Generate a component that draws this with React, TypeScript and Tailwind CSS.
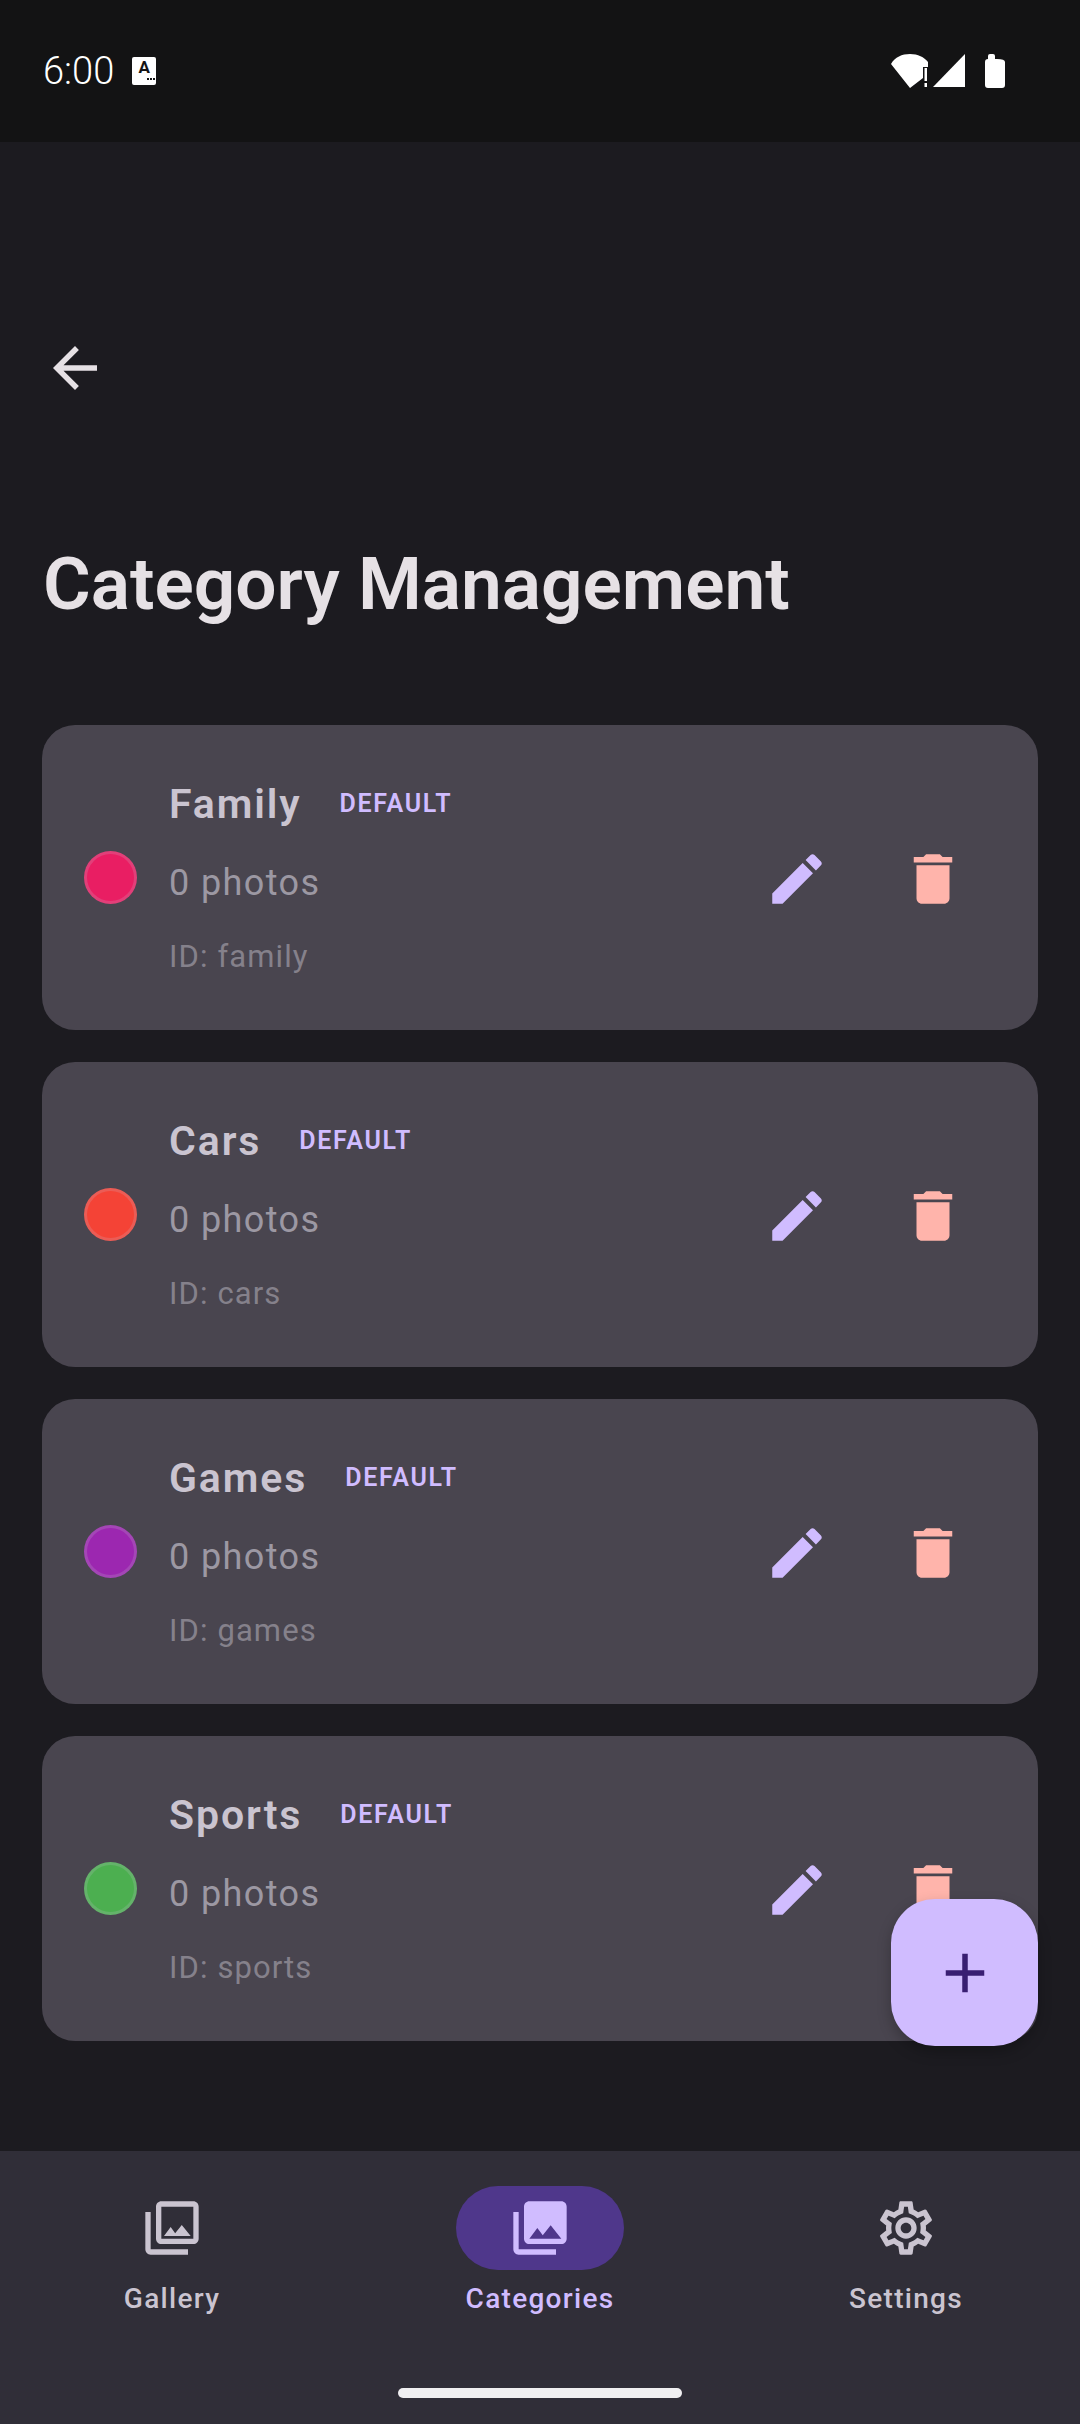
const Ic = ({ d, size = 66, className = "" }: { d: string; size?: number; className?: string }) => (
  <svg width={size} height={size} viewBox="0 0 24 24" className={className} fill="currentColor"><path d={d} /></svg>
);

const BACK = "M20 11H7.83l5.59-5.59L12 4l-8 8 8 8 1.41-1.41L7.83 13H20v-2z";
const EDIT = "M3 17.25V21h3.75L17.81 9.94l-3.75-3.75L3 17.25zM20.71 7.04c.39-.39.39-1.02 0-1.41l-2.34-2.34c-.39-.39-1.02-.39-1.41 0l-1.83 1.83 3.75 3.75 1.83-1.83z";
const DEL = "M6 19c0 1.1.9 2 2 2h8c1.1 0 2-.9 2-2V7H6v12zM19 4h-3.5l-1-1h-5l-1 1H5v2h14V4z";
const ADD = "M19 13h-6v6h-2v-6H5v-2h6V5h2v6h6v2z";
const LIB = "M22 16V4c0-1.1-.9-2-2-2H8c-1.1 0-2 .9-2 2v12c0 1.1.9 2 2 2h12c1.1 0 2-.9 2-2zm-11-4l2.03 2.71L16 11l4 5H8l3-4zM2 6v14c0 1.1.9 2 2 2h14v-2H4V6H2z";
const LIB_O = "M20 4v12H8V4h12m0-2H8c-1.1 0-2 .9-2 2v12c0 1.1.9 2 2 2h12c1.1 0 2-.9 2-2V4c0-1.1-.9-2-2-2zm-8.5 9.67l1.69 2.26 2.48-3.1L19 15H9zM2 6v14c0 1.1.9 2 2 2h14v-2H4V6H2z";
const GEAR = "M19.43 12.98c.04-.32.07-.64.07-.98 0-.34-.03-.66-.07-.98l2.11-1.65c.19-.15.24-.42.12-.64l-2-3.46c-.09-.16-.26-.25-.44-.25-.06 0-.12.01-.17.03l-2.49 1c-.52-.4-1.08-.73-1.69-.98l-.38-2.65C14.46 2.18 14.25 2 14 2h-4c-.25 0-.46.18-.49.42l-.38 2.65c-.61.25-1.17.59-1.69.98l-2.49-1c-.06-.02-.12-.03-.18-.03-.17 0-.34.09-.43.25l-2 3.46c-.13.22-.07.49.12.64l2.11 1.65c-.04.32-.07.65-.07.98 0 .33.03.66.07.98l-2.11 1.65c-.19.15-.24.42-.12.64l2 3.46c.09.16.26.25.44.25.06 0 .12-.01.17-.03l2.49-1c.52.4 1.08.73 1.69.98l.38 2.65c.03.24.24.42.49.42h4c.25 0 .46-.18.49-.42l.38-2.65c.61-.25 1.17-.59 1.69-.98l2.49 1c.06.02.12.03.18.03.17 0 .34-.09.43-.25l2-3.46c.12-.22.07-.49-.12-.64l-2.11-1.65zm-1.98-1.71c.04.31.05.52.05.73 0 .21-.02.43-.05.73l-.14 1.13.89.7 1.08.84-.7 1.21-1.27-.51-1.04-.42-.9.68c-.43.32-.84.56-1.25.73l-1.06.43-.16 1.13-.2 1.35h-1.4l-.19-1.35-.16-1.13-1.06-.43c-.43-.18-.83-.41-1.23-.71l-.91-.7-1.06.43-1.27.51-.7-1.21 1.08-.84.89-.7-.14-1.13c-.03-.31-.05-.54-.05-.74s.02-.43.05-.73l.14-1.13-.89-.7-1.08-.84.7-1.21 1.27.51 1.04.42.9-.68c.43-.32.84-.56 1.25-.73l1.06-.43.16-1.13.2-1.35h1.39l.19 1.35.16 1.13 1.06.43c.43.18.83.41 1.23.71l.91.7 1.06-.43 1.27-.51.7 1.21-1.07.85-.89.7.14 1.13zM12 8c-2.21 0-4 1.79-4 4s1.79 4 4 4 4-1.79 4-4-1.79-4-4-4zm0 6c-1.1 0-2-.9-2-2s.9-2 2-2 2 .9 2 2-.9 2-2 2z";

const cats = [
  { name: "Family", id: "family", dot: "bg-[#e91e63]" },
  { name: "Cars", id: "cars", dot: "bg-[#f44336]" },
  { name: "Games", id: "games", dot: "bg-[#9c27b0]" },
  { name: "Sports", id: "sports", dot: "bg-[#4caf50]" },
];

function Card({ name, id, dot }: { name: string; id: string; dot: string }) {
  return (
    <div className="h-[305px] rounded-[33px] bg-[#49454f] flex items-center pl-[42px]">
      <div className={`w-[53px] h-[53px] rounded-full border-[3px] border-[#cac4d0]/20 ${dot} shrink-0`} />
      <div className="ml-[32px] flex-1 flex flex-col pb-[5px]">
        <div className="flex items-center h-[66px]">
          <span className="text-[41px] leading-[66px] font-semibold tracking-[1.9px] text-[#cac4d0]">{name}</span>
          <span className="ml-[38px] text-[25px] font-semibold tracking-[1.7px] text-[#d0bcff]">DEFAULT</span>
        </div>
        <div className="mt-[19px] text-[36px] leading-[55px] tracking-[1.4px] text-[#9c98a3]">0 photos</div>
        <div className="mt-[24px] text-[31px] leading-[44px] tracking-[1.1px] text-[#85818b]">ID: {id}</div>
      </div>
      <div className="w-[66px] h-[66px] mt-[2px] ml-[1px] text-[#d0bcff] shrink-0"><Ic d={EDIT} /></div>
      <div className="w-[66px] h-[66px] mt-[2px] ml-[70px] mr-[72px] text-[#ffb4ab] shrink-0"><Ic d={DEL} /></div>
    </div>
  );
}

function NavItem({ label, d, active }: { label: string; d: string; active?: boolean }) {
  return (
    <div className={`flex flex-col items-center ${active ? "text-[#d0bcff]" : "text-[#cac4d0]"}`}>
      <div className={`w-[168px] h-[84px] rounded-full flex items-center justify-center ${active ? "bg-[#4f378b]" : ""}`}>
        <Ic d={d} size={64} />
      </div>
      <div className="mt-[7px] text-[28px] leading-[44px] font-medium tracking-[1.3px]">{label}</div>
    </div>
  );
}

export default function App() {
  return (
    <div className="relative w-[1080px] h-[2424px] overflow-hidden bg-[#1c1b20] flex flex-col font-['Roboto',sans-serif]">
      <div className="h-[142px] bg-[#131314] shrink-0 flex items-center pl-[43px] pr-[75px] text-white">
        <span className="text-[38px] leading-[40px] font-light">6:00</span>
        <div className="ml-[18px] w-[24px] h-[28px] rounded-[2px] bg-white flex flex-col items-center">
          <span className="text-[17px] leading-[21px] font-bold text-[#131314]">A</span>
          <div className="flex gap-[1px] justify-end w-full pr-[1px]">
            <i className="w-[2px] h-[2px] bg-[#131314]" />
            <i className="w-[2px] h-[2px] bg-[#131314]" />
            <i className="w-[2px] h-[2px] bg-[#131314]" />
          </div>
        </div>
        <div className="flex-1" />
        <svg width="114" height="34" viewBox="0 0 114 34" fill="white">
          <path d="M0 10 C4 3 11 0 19 0 C27 0 33 3 37 8 L37 13 L32 13 L32 24 L19 34 Z" />
          <rect x="33.5" y="14" width="2.5" height="13" />
          <rect x="33.5" y="29" width="2.5" height="4" />
          <path d="M74 0 V33 H42 Z" />
          <path d="M97 5 V2 Q97 0 99 0 H102 Q104 0 104 2 V5 H106 Q114 5 114 8 V31 Q114 34 111 34 H97 Q94 34 94 31 V8 Q94 5 97 5 Z" />
        </svg>
      </div>

      <div className="flex-1 flex flex-col px-[42px]">
        <div className="mt-[193px] w-[66px] h-[66px] text-[#e6e1e5]"><Ic d={BACK} /></div>
        <h1 className="mt-[133px] pl-[1px] text-[73px] leading-[100px] font-semibold text-[#e6e1e5]">Category Management</h1>
        <div className="mt-[91px] flex flex-col gap-[32px]">
          {cats.map((c) => <Card key={c.id} {...c} />)}
        </div>
      </div>

      <div className="h-[273px] shrink-0 bg-[#302e38] relative">
        <div className="grid grid-cols-[344px_392px_340px] pt-[35px] justify-items-center">
          <NavItem label="Gallery" d={LIB_O} />
          <NavItem label="Categories" d={LIB} active />
          <NavItem label="Settings" d={GEAR} />
        </div>
        <div className="absolute left-[398px] top-[237px] w-[284px] h-[10px] rounded-full bg-[#f0eff1]" />
      </div>

      <div className="absolute left-[891px] top-[1899px] w-[147px] h-[147px] rounded-[44px] bg-[#d0bcff] text-[#381e72] flex items-center justify-center shadow-[0_6px_14px_rgba(0,0,0,0.25)]">
        <Ic d={ADD} />
      </div>
    </div>
  );
}
